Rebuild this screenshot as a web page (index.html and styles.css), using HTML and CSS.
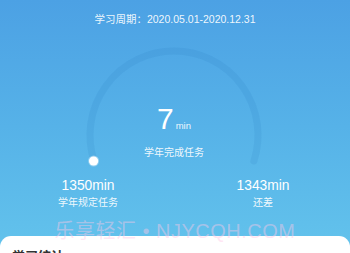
FILE: index.html
```html
<!DOCTYPE html>
<html lang="zh-CN">
<head>
<meta charset="utf-8">
<title>学习统计</title>
<link rel="stylesheet" href="styles.css">
</head>
<body>
<div class="page">
  <div class="period">学习周期：2020.05.01-2020.12.31</div>
  <div class="gauge">
    <svg class="gauge-svg" width="350" height="138" viewBox="0 0 350 138">
      <path d="M94.1 121 A84 84 0 1 1 253.9 121" fill="none" stroke="rgba(25,105,185,0.11)" stroke-width="7" stroke-linecap="round"/>
      <circle cx="93.6" cy="121" r="5.5" fill="rgba(255,255,255,0.35)"/>
      <circle cx="93.6" cy="121" r="4.6" fill="#ffffff"/>
    </svg>
    <div class="gauge-center">
      <div class="done"><span class="done-num">7</span><span class="done-unit">min</span></div>
      <div class="done-label">学年完成任务</div>
    </div>
  </div>
  <div class="stats">
    <div class="stat">
      <div class="stat-value">1350min</div>
      <div class="stat-label">学年规定任务</div>
    </div>
    <div class="stat">
      <div class="stat-value">1343min</div>
      <div class="stat-label">还差</div>
    </div>
  </div>
  <div class="card">
    <div class="card-title">学习统计</div>
  </div>
  <div class="watermark">乐享轻汇 • NJYCQH.COM</div>
</div>
</body>
</html>
```
FILE: styles.css
```css
* { box-sizing: border-box; }
html, body {
  margin: 0;
  padding: 0;
  width: 350px;
  height: 253px;
  overflow: hidden;
}
body {
  font-family: "Liberation Sans", "Noto Sans CJK SC", sans-serif;
  color: #fff;
}
.page {
  position: relative;
  width: 350px;
  height: 253px;
  overflow: hidden;
  display: flex;
  flex-direction: column;
  background: linear-gradient(180deg, #4ca1e4 0%, #56b2e8 50%, #63c3ec 100%);
}
.page > * {
  flex-shrink: 0;
}
.period {
  padding-top: 13px;
  height: 40px;
  font-size: 10.5px;
  line-height: 12px;
  text-align: center;
  color: rgba(255, 255, 255, 0.92);
}
.gauge {
  display: grid;
  height: 138px;
}
.gauge-svg {
  grid-area: 1 / 1;
  display: block;
}
.gauge-center {
  grid-area: 1 / 1;
  padding-top: 64px;
  display: flex;
  flex-direction: column;
  align-items: center;
  width: 348px;
}
.done {
  height: 30px;
  line-height: 30px;
  white-space: nowrap;
}
.done-num {
  font-size: 30px;
}
.done-unit {
  font-size: 9.5px;
  margin-left: 2px;
  color: rgba(255, 255, 255, 0.92);
}
.done-label {
  margin-top: 13px;
  font-size: 10px;
  line-height: 12px;
  color: rgba(255, 255, 255, 0.92);
}
.stats {
  display: flex;
  justify-content: space-between;
  padding: 0 47px 0 48px;
}
.stat {
  width: 80px;
  display: flex;
  flex-direction: column;
  align-items: center;
}
.stat-value {
  font-size: 13.8px;
  line-height: 16px;
  white-space: nowrap;
}
.stat-label {
  margin-top: 3px;
  font-size: 10px;
  line-height: 12px;
  color: rgba(255, 255, 255, 0.92);
}
.card {
  margin-top: 27px;
  height: 40px;
  background: #fff;
  border-radius: 11px 11px 0 0;
  padding: 13px 12px 0;
}
.card-title {
  font-size: 13px;
  line-height: 16px;
  font-weight: bold;
  color: #333;
}
.watermark {
  position: absolute;
  left: 0;
  right: 0;
  top: 219px;
  text-align: center;
  font-size: 20px;
  line-height: 24px;
  letter-spacing: 0.5px;
  color: rgba(255, 200, 230, 0.45);
  white-space: nowrap;
  pointer-events: none;
}
```
